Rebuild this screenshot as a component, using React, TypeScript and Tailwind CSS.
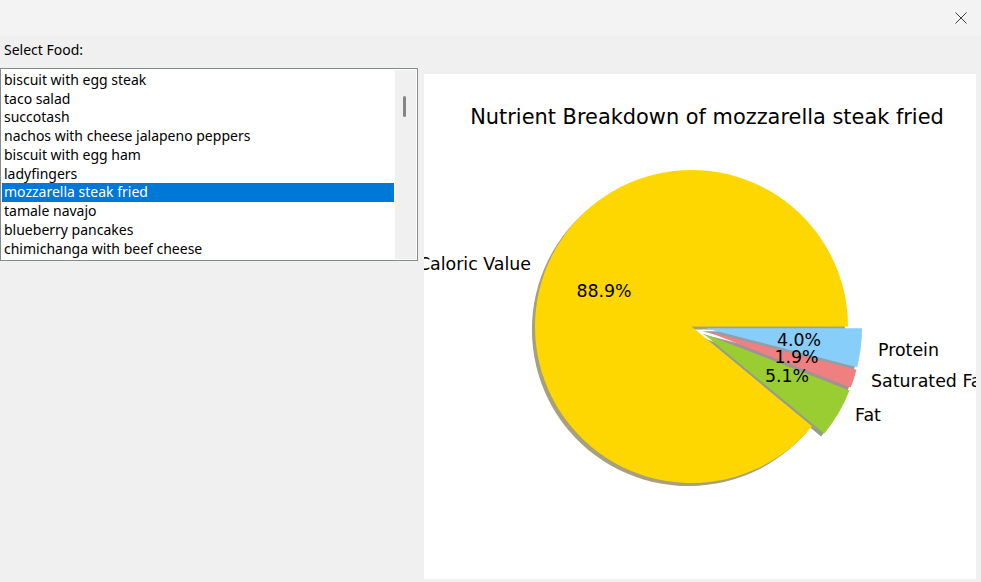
import React from 'react';

const foods = [
  'biscuit with egg steak',
  'taco salad',
  'succotash',
  'nachos with cheese jalapeno peppers',
  'biscuit with egg ham',
  'ladyfingers',
  'mozzarella steak fried',
  'tamale navajo',
  'blueberry pancakes',
  'chimichanga with beef cheese',
];

const selected = 'mozzarella steak fried';

// pie geometry, in page pixels
const CX = 691.5;
const CY = 326.5;
const R = 156.5;
const EXPLODE = 0.09;

type Slice = { label: string; pct: number; color: string; shadow: string; explode: number };

const slices: Slice[] = [
  { label: 'Caloric Value', pct: 88.9, color: '#FFD700', shadow: 'rgb(77,65,0)', explode: 0 },
  { label: 'Fat', pct: 5.1, color: '#9ACD32', shadow: 'rgb(46,62,15)', explode: EXPLODE },
  { label: 'Saturated Fat', pct: 1.9, color: '#F08080', shadow: 'rgb(72,38,38)', explode: EXPLODE },
  { label: 'Protein', pct: 4.0, color: '#87CEFA', shadow: 'rgb(40,62,75)', explode: EXPLODE },
];

const pt = (cx: number, cy: number, r: number, deg: number) => {
  const a = (deg * Math.PI) / 180;
  return [cx + r * Math.cos(a), cy - r * Math.sin(a)];
};

function buildWedges() {
  const total = slices.reduce((s, x) => s + x.pct, 0);
  let start = 0;
  return slices.map((s) => {
    const sweep = (s.pct / total) * 360;
    const end = start + sweep;
    const mid = (start + end) / 2;
    const [ox, oy] = pt(0, 0, s.explode * R, mid);
    const cx = CX + ox;
    const cy = CY + oy;
    const [x1, y1] = pt(cx, cy, R, start);
    const [x2, y2] = pt(cx, cy, R, end);
    const large = sweep > 180 ? 1 : 0;
    const d = `M ${cx} ${cy} L ${x1} ${y1} A ${R} ${R} 0 ${large} 0 ${x2} ${y2} Z`;
    start = end;
    return { ...s, d };
  });
}

function PieChart() {
  const wedges = buildWedges();
  return (
    <svg width={552} height={505} viewBox="424 74 552 505" className="block">
      <rect x={424} y={74} width={552} height={505} fill="#ffffff" />
      <text
        x={707}
        y={123.5}
        textAnchor="middle"
        fontSize={20.9}
        fill="#000"
        style={{ fontFamily: '"DejaVu Sans", sans-serif' }}
      >
        Nutrient Breakdown of mozzarella steak fried
      </text>
      {wedges.map((w) => (
        <path key={'s' + w.label} d={w.d} fill={w.shadow} fillOpacity={0.5} transform="translate(-3.1 3.1)" />
      ))}
      {wedges.map((w) => (
        <path key={w.label} d={w.d} fill={w.color} />
      ))}
      <g fontSize={17.4} fill="#000" style={{ fontFamily: '"DejaVu Sans", sans-serif' }}>
        <text x={531} y={270} textAnchor="end">Caloric Value</text>
        <text x={878} y={356}>Protein</text>
        <text x={871} y={387}>Saturated Fat</text>
        <text x={855} y={421}>Fat</text>
        <text x={604} y={297} textAnchor="middle">88.9%</text>
        <text x={799} y={346} textAnchor="middle">4.0%</text>
        <text x={796.5} y={363} textAnchor="middle">1.9%</text>
        <text x={787} y={382} textAnchor="middle">5.1%</text>
      </g>
    </svg>
  );
}

export default function App() {
  return (
    <div
      className="w-[981px] h-[582px] overflow-hidden bg-[#f0f0f0] text-black"
      style={{ fontFamily: '"Noto Sans", sans-serif' }}
    >
      {/* window title bar */}
      <div className="h-9 bg-[#f3f3f3] flex items-center justify-end pr-[14px]">
        <svg width="12" height="12" viewBox="0 0 12 12" className="block">
          <path d="M0.5 0.5 L11.5 11.5 M11.5 0.5 L0.5 11.5" stroke="#404040" strokeWidth="1" fill="none" />
        </svg>
      </div>

      <div className="flex gap-[6px]">
        {/* food picker */}
        <div className="w-[418px] pt-[4px]">
          <div className="h-5 pl-[4px] text-[14px] leading-5">Select Food:</div>
          <div className="mt-[8px] h-[193px] border border-[#868a91] bg-white flex p-[1px]">
            <div className="flex-1 pt-[0.75px]">
              {foods.map((f) => (
                <div
                  key={f}
                  className={`h-[18.75px] pl-[2px] text-[14px] leading-[18.75px] whitespace-nowrap ${
                    f === selected ? 'bg-[#0078d7] text-white' : ''
                  }`}
                >
                  {f}
                </div>
              ))}
            </div>
            <div className="w-[21px] ml-[1px] bg-[#f0f0f0] pt-[26px] pl-[8px]">
              <div className="w-[3px] h-[21px] rounded-full bg-[#858585]" />
            </div>
          </div>
        </div>

        {/* chart canvas */}
        <div className="mt-[38px]">
          <PieChart />
        </div>
      </div>
    </div>
  );
}
